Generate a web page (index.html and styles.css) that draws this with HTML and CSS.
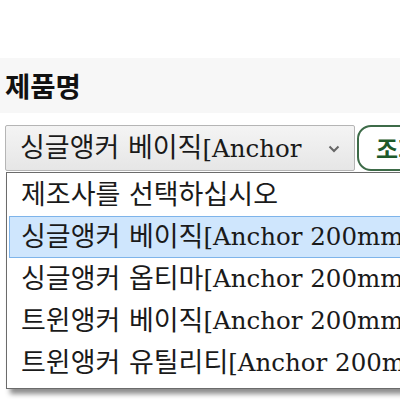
FILE: index.html
```html
<!DOCTYPE html>
<html lang="ko">
<head>
<meta charset="utf-8">
<link rel="stylesheet" href="styles.css">
</head>
<body>
<div class="page">
  <div class="band"><span class="title">제품명</span></div>
  <div class="row">
    <div class="select">
      <span class="sel-text">싱글앵커 베이직<span class="en">[Anchor</span></span>
      <svg class="chev" width="12" height="8" viewBox="0 0 12 8"><path d="M1.5 1.5 L6 6 L10.5 1.5" fill="none" stroke="#666" stroke-width="2"/></svg>
    </div>
    <button class="btn">조회</button>
    <div class="list">
      <div class="opt">제조사를 선택하십시오</div>
      <div class="opt sel">싱글앵커 베이직<span class="en">[Anchor 200mm]</span></div>
      <div class="opt">싱글앵커 옵티마<span class="en">[Anchor 200mm]</span></div>
      <div class="opt">트윈앵커 베이직<span class="en">[Anchor 200mm]</span></div>
      <div class="opt">트윈앵커 유틸리티<span class="en">[Anchor 200mm]</span></div>
    </div>
  </div>
</div>
</body>
</html>
```

FILE: styles.css
```css
html, body { margin: 0; padding: 0; background: #fff; overflow: hidden; }
.page { padding-top: 58px; width: 400px; height: 400px; box-sizing: border-box; overflow: hidden; }
.band {
  height: 55px;
  background: #f7f7f7;
  display: flex;
  align-items: center;
  padding-left: 5px;
}
.title {
  font-family: "Noto Sans CJK KR", sans-serif;
  font-weight: 700;
  font-size: 27.5px;
  line-height: 1;
  color: #111;
}
.row {
  position: relative;
  margin-top: 12px;
  padding-left: 5px;
  display: flex;
  gap: 2px;
  white-space: nowrap;
}
.select {
  flex: none;
  width: 350px;
  height: 46px;
  box-sizing: border-box;
  border: 1px solid #b5b5b5;
  border-radius: 2px;
  background: linear-gradient(#f4f4f4, #e6e6e6);
  display: flex;
  align-items: center;
  padding-left: 14px;
  padding-right: 14px;
  justify-content: space-between;
  overflow: hidden;
}
.sel-text, .opt {
  font-family: "DejaVu Serif", "Noto Sans CJK KR", serif;
  font-size: 27px;
  color: #1a1a1a;
}
.sel-text { line-height: 30px; }
.en { font-size: 24.5px; }
.chev { flex: none; margin-top: 2px; }
.btn {
  flex: none;
  height: 46px;
  width: 70px;
  padding: 0 0 0 17px;
  border: 2px solid #3d6b48;
  border-radius: 14px;
  background: #fff;
  font-family: "Noto Sans CJK KR", sans-serif;
  font-weight: 700;
  font-size: 24px;
  color: #1d5a2b;
  line-height: 1;
  overflow: hidden;
  text-align: left;
  white-space: nowrap;
}
.list {
  position: absolute;
  top: 47px;
  left: 6px;
  width: 430px;
  background: #fff;
  border: 1px solid #6b6b6b;
  box-shadow: 4px 5px 5px rgba(0,0,0,0.45);
  padding: 1px 2px 4px 2px;
}
.opt {
  height: 42px;
  box-sizing: border-box;
  display: flex;
  align-items: center;
  padding-left: 11px;
  line-height: 30px;
  border: 1px solid transparent;
  white-space: nowrap;
}
.opt.sel {
  background: #cfe6fd;
  border-color: #7eb4ea;
}
```
